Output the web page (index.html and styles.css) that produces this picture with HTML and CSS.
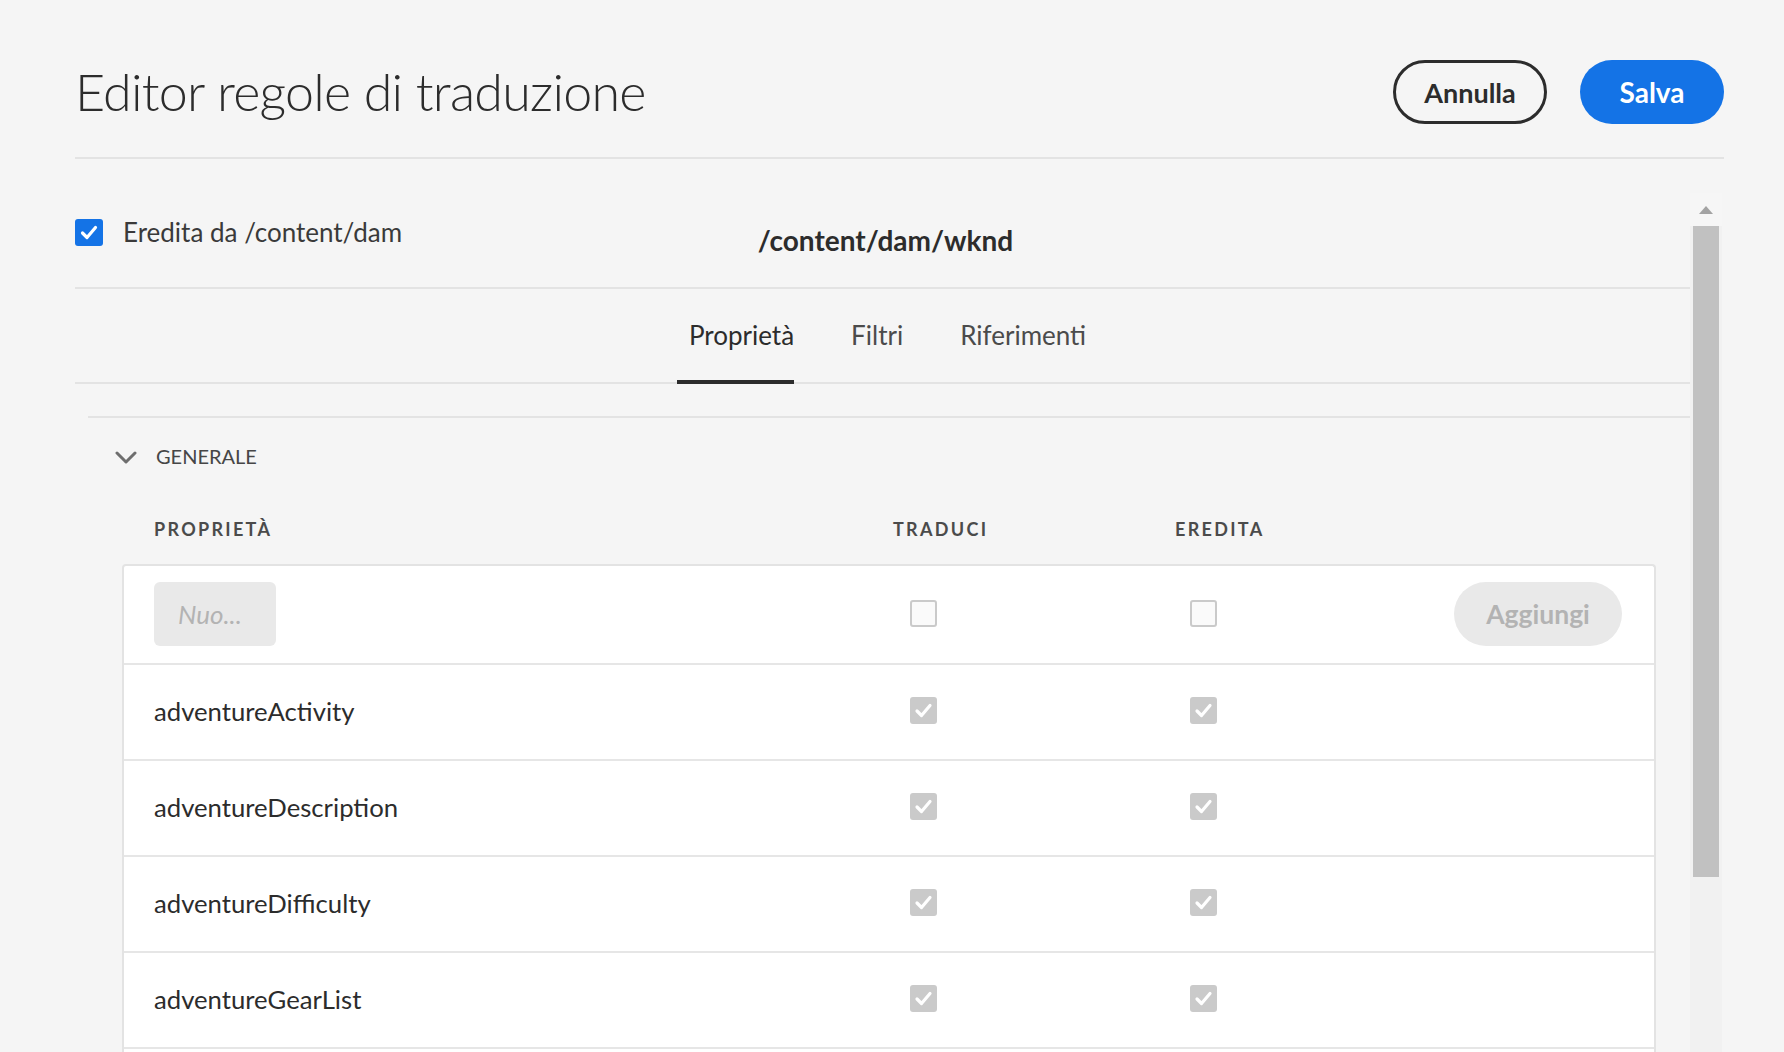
FILE: index.html
```html
<!DOCTYPE html>
<html lang="it">
<head>
<meta charset="utf-8">
<title>Editor regole di traduzione</title>
<link rel="stylesheet" href="styles.css">
</head>
<body>
<div class="page">
  <header class="header">
    <h1 class="title">Editor regole di traduzione</h1>
    <div class="actions">
      <button class="btn btn-outline">Annulla</button>
      <button class="btn btn-primary">Salva</button>
    </div>
  </header>

  <div class="panel">
    <div class="panel-content">
      <div class="path-row">
        <label class="inherit">
          <span class="cb cb-blue"><svg viewBox="0 0 28 27" width="28" height="27"><path d="M7.5 14 L12 18.5 L20.5 8.5" fill="none" stroke="#fff" stroke-width="3.2" stroke-linecap="round" stroke-linejoin="round"/></svg></span>
          <span class="inherit-label">Eredita da /content/dam</span>
        </label>
        <div class="path">/content/dam/wknd</div>
        <div></div>
      </div>

      <nav class="tabs">
        <div class="tab tab-active">Proprietà</div>
        <div class="tab">Filtri</div>
        <div class="tab">Riferimenti</div>
      </nav>

      <section class="section">
        <div class="section-head">
          <svg class="chevron" viewBox="0 0 22 13" width="22" height="13"><path d="M2 2 L11 11 L20 2" fill="none" stroke="#6e6e6e" stroke-width="3" stroke-linecap="round" stroke-linejoin="round"/></svg>
          <span class="section-title">GENERALE</span>
        </div>

        <div class="cols grid">
          <div class="col-label">PROPRIETÀ</div>
          <div class="col-label">TRADUCI</div>
          <div class="col-label">EREDITA</div>
          <div></div>
        </div>

        <div class="table">
          <div class="row grid row-new">
            <div><div class="input">Nuo...</div></div>
            <div><span class="cb cb-empty cb-col2"></span></div>
            <div><span class="cb cb-empty cb-col3"></span></div>
            <div class="add-cell"><button class="btn btn-add">Aggiungi</button></div>
          </div>
          <div class="row grid">
            <div class="prop">adventureActivity</div>
            <div><span class="cb cb-gray cb-col2"><svg viewBox="0 0 27 27" width="27" height="27"><path d="M7 14 L11.5 18.5 L20 8.5" fill="none" stroke="#fff" stroke-width="3.2" stroke-linecap="round" stroke-linejoin="round"/></svg></span></div>
            <div><span class="cb cb-gray cb-col3"><svg viewBox="0 0 27 27" width="27" height="27"><path d="M7 14 L11.5 18.5 L20 8.5" fill="none" stroke="#fff" stroke-width="3.2" stroke-linecap="round" stroke-linejoin="round"/></svg></span></div>
            <div></div>
          </div>
          <div class="row grid">
            <div class="prop">adventureDescription</div>
            <div><span class="cb cb-gray cb-col2"><svg viewBox="0 0 27 27" width="27" height="27"><path d="M7 14 L11.5 18.5 L20 8.5" fill="none" stroke="#fff" stroke-width="3.2" stroke-linecap="round" stroke-linejoin="round"/></svg></span></div>
            <div><span class="cb cb-gray cb-col3"><svg viewBox="0 0 27 27" width="27" height="27"><path d="M7 14 L11.5 18.5 L20 8.5" fill="none" stroke="#fff" stroke-width="3.2" stroke-linecap="round" stroke-linejoin="round"/></svg></span></div>
            <div></div>
          </div>
          <div class="row grid">
            <div class="prop">adventureDifficulty</div>
            <div><span class="cb cb-gray cb-col2"><svg viewBox="0 0 27 27" width="27" height="27"><path d="M7 14 L11.5 18.5 L20 8.5" fill="none" stroke="#fff" stroke-width="3.2" stroke-linecap="round" stroke-linejoin="round"/></svg></span></div>
            <div><span class="cb cb-gray cb-col3"><svg viewBox="0 0 27 27" width="27" height="27"><path d="M7 14 L11.5 18.5 L20 8.5" fill="none" stroke="#fff" stroke-width="3.2" stroke-linecap="round" stroke-linejoin="round"/></svg></span></div>
            <div></div>
          </div>
          <div class="row grid">
            <div class="prop">adventureGearList</div>
            <div><span class="cb cb-gray cb-col2"><svg viewBox="0 0 27 27" width="27" height="27"><path d="M7 14 L11.5 18.5 L20 8.5" fill="none" stroke="#fff" stroke-width="3.2" stroke-linecap="round" stroke-linejoin="round"/></svg></span></div>
            <div><span class="cb cb-gray cb-col3"><svg viewBox="0 0 27 27" width="27" height="27"><path d="M7 14 L11.5 18.5 L20 8.5" fill="none" stroke="#fff" stroke-width="3.2" stroke-linecap="round" stroke-linejoin="round"/></svg></span></div>
            <div></div>
          </div>
          <div class="row row-more"></div>
        </div>
      </section>
    </div>

    <div class="scrollbar">
      <div class="scroll-up"><svg viewBox="0 0 14 8" width="14" height="8"><path d="M0 8 L7 0 L14 8 Z" fill="#a3a3a3"/></svg></div>
      <div class="scroll-thumb"></div>
      <div class="scroll-track"></div>
    </div>
  </div>
</div>
</body>
</html>
```

FILE: styles.css
```css
html, body {
  margin: 0;
  padding: 0;
  height: 100%;
  overflow: hidden;
  background: #f5f5f5;
}

body {
  font-family: "Lato", "Open Sans", sans-serif;
  color: #2c2c2c;
}

.page {
  padding: 60px 60px 0 75px;
  height: 100%;
  box-sizing: border-box;
  display: flex;
  flex-direction: column;
}

.header {
  display: flex;
  align-items: center;
  justify-content: space-between;
  height: 64px;
  padding-bottom: 33px;
  border-bottom: 2px solid #e3e3e3;
  flex: none;
}

.title {
  margin: 0 0 3px 0;
  font-weight: 300;
  font-size: 52px;
  letter-spacing: -0.75px;
  color: #2c2c2c;
  line-height: 1;
}

.actions {
  display: flex;
  gap: 33px;
}

.btn {
  font-family: "Lato", "Open Sans", sans-serif;
  font-weight: 700;
  font-size: 27px;
  height: 64px;
  border-radius: 32px;
  padding: 0;
  cursor: pointer;
}

.btn-outline {
  width: 154px;
  background: transparent;
  border: 3px solid #2c2c2c;
  color: #2c2c2c;
}

.btn-primary {
  width: 144px;
  background: #1473e6;
  border: none;
  color: #fff;
  font-size: 28px;
}

.panel {
  flex: 1;
  display: flex;
  margin-top: 34px;
  margin-right: 2px;
  min-height: 0;
}

.panel-content {
  flex: 1;
  min-width: 0;
}

.path-row {
  display: grid;
  grid-template-columns: 1fr auto 1fr;
  align-items: center;
  height: 94px;
  border-bottom: 2px solid #e3e3e3;
}

.inherit {
  align-self: start;
  padding-top: 23px;
  display: flex;
  align-items: center;
  gap: 20px;
}

.inherit-label {
  font-size: 26px;
  color: #3a3a3a;
}

.path {
  font-weight: 700;
  font-size: 28px;
  color: #2c2c2c;
  padding-left: 6px;
}

.cb {
  display: inline-flex;
  box-sizing: border-box;
  width: 27px;
  height: 27px;
  border-radius: 3px;
  flex: none;
}

.cb-blue {
  width: 28px;
  background: #1473e6;
}

.cb-empty {
  border: 2px solid #cacaca;
  background: #fafafa;
}

.cb-gray {
  background: #cacaca;
}

.tabs {
  display: flex;
  justify-content: center;
  gap: 57px;
  height: 93px;
  border-bottom: 2px solid #e3e3e3;
  padding-left: 10px;
}

.tab {
  height: 91px;
  display: flex;
  align-items: center;
  font-size: 26px;
  color: #4b4b4b;
  border-bottom: 4px solid transparent;
}

.tab-active {
  color: #2c2c2c;
  border-bottom-color: #2c2c2c;
  padding-left: 12px;
  margin-left: -12px;
}

.section {
  margin-top: 32px;
  margin-left: 13px;
  border-top: 2px solid #e3e3e3;
}

.section-head {
  height: 76px;
  display: flex;
  align-items: center;
  padding-left: 27px;
  gap: 19px;
}

.chevron {
  margin-top: 3px;
}

.section-title {
  font-size: 20px;
  color: #464646;
}

.grid {
  display: grid;
  grid-template-columns: 739px 282px 1fr auto;
  align-items: center;
}

.cols {
  height: 70px;
  margin: 0 34px 0 34px;
  padding-left: 32px;
}

.col-label {
  font-size: 18px;
  font-weight: 700;
  letter-spacing: 2.3px;
  color: #4b4b4b;
}

.table {
  margin: 0 34px 0 34px;
  background: #fff;
  border: 2px solid #e3e3e3;
  border-bottom: none;
  border-radius: 4px 4px 0 0;
}

.row {
  box-sizing: content-box;
  padding: 0 32px 3px 30px;
  height: 91px;
  border-top: 2px solid #e6e6e6;
}

.row-new {
  height: 95px;
  padding-bottom: 2px;
  border-top: none;
}

.row-more {
  height: 60px;
}

.input {
  width: 122px;
  height: 64px;
  box-sizing: border-box;
  background: #e9e9e9;
  border-radius: 6px;
  padding-left: 24px;
  display: flex;
  align-items: center;
  font-style: italic;
  font-size: 26px;
  color: #b3b3b3;
}

.cb-col2 {
  margin-left: 17px;
  vertical-align: middle;
}

.cb-col3 {
  margin-left: 15px;
  vertical-align: middle;
}

.add-cell {
  display: flex;
  justify-content: flex-end;
}

.btn-add {
  width: 168px;
  background: #e9e9e9;
  border: none;
  color: #b3b3b3;
  font-size: 26.5px;
}

.prop {
  font-size: 25.7px;
  color: #2c2c2c;
}

.scrollbar {
  width: 32px;
  flex: none;
  display: flex;
  flex-direction: column;
  background: #f1f1f1;
}

.scroll-up {
  height: 33px;
  flex: none;
  display: flex;
  align-items: center;
  justify-content: center;
  background: #f6f6f6;
}

.scroll-thumb {
  height: 651px;
  margin: 0 3px;
  background: #c1c1c1;
  flex: none;
}

.scroll-track {
  flex: 1;
}
```
